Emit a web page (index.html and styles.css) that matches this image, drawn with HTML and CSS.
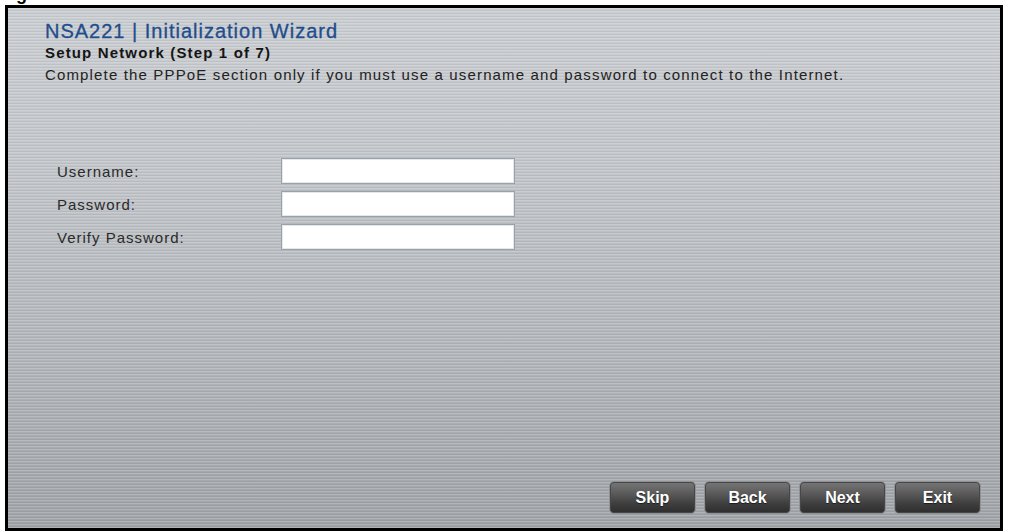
FILE: index.html
```html
<!DOCTYPE html>
<html>
<head>
<meta charset="utf-8">
<link rel="stylesheet" href="styles.css">
</head>
<body>
<div class="caption"><span class="caption-text">Figure</span></div>
<div class="wizard">
  <h1 class="title">NSA221 | Initialization Wizard</h1>
  <h2 class="step">Setup Network (Step 1 of 7)</h2>
  <p class="desc">Complete the PPPoE section only if you must use a username and password to connect to the Internet.</p>
  <div class="form">
    <div class="row"><label class="label">Username:</label><input class="field" type="text"></div>
    <div class="row"><label class="label">Password:</label><input class="field" type="password"></div>
    <div class="row"><label class="label">Verify Password:</label><input class="field" type="password"></div>
  </div>
  <div class="actions">
    <button class="btn">Skip</button>
    <button class="btn">Back</button>
    <button class="btn">Next</button>
    <button class="btn">Exit</button>
  </div>
</div>
</body>
</html>
```
FILE: styles.css
```css
html, body {
  margin: 0;
  padding: 0;
  background: #ffffff;
}
body {
  width: 1009px;
  height: 532px;
  overflow: hidden;
  font-family: "Liberation Sans", Arial, sans-serif;
}
.caption {
  height: 5px;
  overflow: hidden;
}
.caption-text {
  display: block;
  margin-top: -15px;
  font-weight: bold;
  font-size: 18px;
  line-height: 18px;
  color: #000;
}
.wizard {
  box-sizing: border-box;
  width: 998px;
  height: 526px;
  margin-left: 5px;
  border: 3px solid #000;
  padding: 11px 19px 14px 37px;
  display: flex;
  flex-direction: column;
  background:
    repeating-linear-gradient(180deg, rgba(255,255,255,0.16) 0px, rgba(255,255,255,0.16) 1px, rgba(0,0,0,0) 1px, rgba(0,0,0,0) 2px, rgba(0,0,0,0.05) 2px, rgba(0,0,0,0.05) 3px),
    linear-gradient(180deg, #cbced2 0%, #c3c6ca 30%, #b3b7bb 65%, #a0a4a8 100%);
}
.title {
  margin: 0;
  font-size: 20px;
  line-height: 24px;
  font-weight: normal;
  letter-spacing: 1px;
  color: #1f4d8c;
  -webkit-text-stroke: 0.3px #1f4d8c;
}
.step {
  margin: 1px 0 0 0;
  font-size: 15px;
  line-height: 18px;
  font-weight: bold;
  letter-spacing: 1.15px;
  color: #151515;
}
.desc {
  margin: 4px 0 0 0;
  font-size: 15px;
  line-height: 18px;
  letter-spacing: 1.15px;
  color: #222;
}
.form {
  margin: 74px 0 0 12px;
  display: flex;
  flex-direction: column;
  gap: 7px;
}
.row {
  display: flex;
  align-items: center;
}
.label {
  width: 224px;
  font-size: 15px;
  letter-spacing: 1px;
  color: #2a2a2a;
  padding-top: 1px;
}
.field {
  box-sizing: border-box;
  width: 234px;
  height: 26px;
  margin: 0;
  padding: 0 3px;
  border: 1px solid #98a2ad;
  box-shadow: inset 0 0 0 1px #e6e9ec;
  background: #fff;
  outline: none;
}
.actions {
  margin-top: auto;
  display: flex;
  justify-content: flex-end;
  gap: 8px;
}
.btn {
  box-sizing: border-box;
  width: 87px;
  height: 33px;
  border: 1px solid #8f9295;
  border-radius: 5px;
  background: linear-gradient(180deg, #777 0%, #5c5c5c 35%, #3e3e3e 70%, #2d2d2d 100%);
  box-shadow: inset 0 0 0 1px #474747;
  color: #fff;
  font-family: "Liberation Sans", Arial, sans-serif;
  font-weight: bold;
  font-size: 16px;
  text-shadow: 0 1px 1px rgba(0,0,0,0.6);
  padding: 0;
}
```
